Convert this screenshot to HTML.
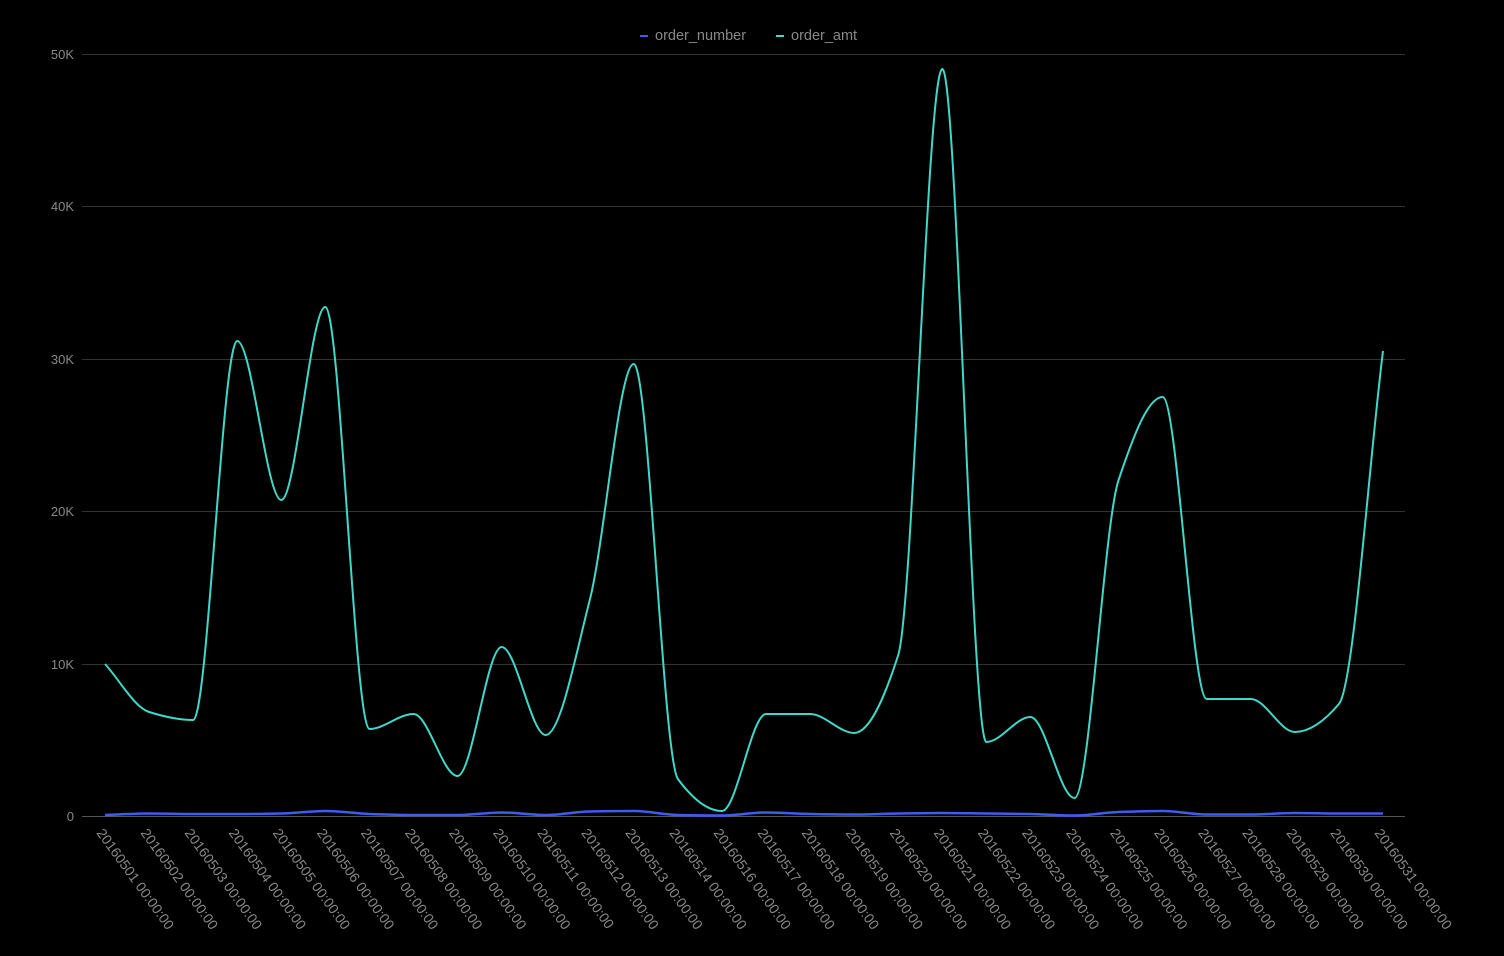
<!DOCTYPE html>
<html><head><meta charset="utf-8"><style>
html,body{margin:0;padding:0;background:#000;width:1504px;height:956px;overflow:hidden}
svg{display:block}
text{font-family:"Liberation Sans",sans-serif;}
</style></head><body>
<svg id="c" width="1504" height="956" xmlns="http://www.w3.org/2000/svg">
<g stroke="#333" stroke-width="1">
<line x1="82" x2="1405" y1="54.5" y2="54.5"/>
<line x1="82" x2="1405" y1="206.5" y2="206.5"/>
<line x1="82" x2="1405" y1="359.5" y2="359.5"/>
<line x1="82" x2="1405" y1="511.5" y2="511.5"/>
<line x1="82" x2="1405" y1="664.5" y2="664.5"/>
<line x1="82" x2="1405" y1="816.5" y2="816.5" stroke="#555"/>
</g>
<g fill="#888" font-size="13" text-anchor="end">
<text x="74" y="59">50K</text><text x="74" y="211">40K</text><text x="74" y="364">30K</text>
<text x="74" y="516">20K</text><text x="74" y="669">10K</text><text x="74" y="821">0</text>
</g>
<line x1="640" x2="648" y1="36" y2="36" stroke="#3d5cf0" stroke-width="2"/>
<text x="655" y="40" fill="#888" font-size="14.5">order_number</text>
<line x1="776" x2="784" y1="36" y2="36" stroke="#40d8c8" stroke-width="2"/>
<text x="791" y="40" fill="#888" font-size="14.5">order_amt</text>
<g id="labels" fill="#888" font-size="14"></g>
<path id="amt" fill="none" stroke="#40d8c8" stroke-width="2"/>
<path id="num" fill="none" stroke="#3d5cf0" stroke-width="2.5"/>
</svg>
<script>
var lab=["01","02","03","04","05","06","07","08","09","10","11","12","13","14","16","17","18","19","20","21","22","23","24","25","26","27","28","29","30","31"];
var amt=[664,712,720,341,500,307,729,714,776,647,735,600,364,779,811,714,714,733,655,69,742,717,798,480,397,699,699,732,704,351];
var num=[815,813.5,814,814,813.5,811,814,815,815,812.5,815,811.5,811,815,815.5,812.5,814,814.5,813.5,813,813.5,814,815.5,812,811,814.5,814.5,813,813.5,813.5];
var step=(1383-105)/29,g=document.getElementById('labels'),s='';
for(var i=0;i<30;i++){var x=105+i*step;s+='<text transform="translate('+(x-9)+',833) rotate(54)">201605'+lab[i]+' 00:00:00</text>';}
g.innerHTML=s;
function path(ys){var n=ys.length,h=step,dl=[],m=[];
for(var i=0;i<n-1;i++)dl.push((ys[i+1]-ys[i])/h);
m[0]=dl[0];m[n-1]=dl[n-2];
for(var i=1;i<n-1;i++){if(dl[i-1]*dl[i]<=0)m[i]=0;else m[i]=2/(1/dl[i-1]+1/dl[i]);}
var d='M105,'+ys[0];
for(var i=0;i<n-1;i++){var x0=105+i*h,x1=x0+h;
d+=' C'+(x0+h/3)+','+(ys[i]+m[i]*h/3)+' '+(x1-h/3)+','+(ys[i+1]-m[i+1]*h/3)+' '+x1+','+ys[i+1];}
return d;}
document.getElementById('amt').setAttribute('d',path(amt));
document.getElementById('num').setAttribute('d',path(num));
</script>
</body></html>
